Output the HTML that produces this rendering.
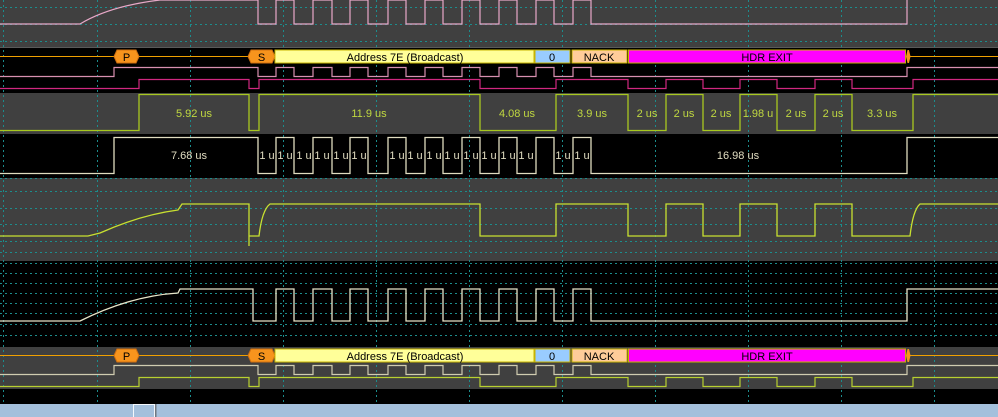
<!DOCTYPE html>
<html><head><meta charset="utf-8"><style>
html,body{margin:0;padding:0;background:#000;width:998px;height:417px;overflow:hidden}
svg{display:block}
text{font-family:"Liberation Sans",sans-serif;font-size:11px}
</style></head><body>
<svg width="998" height="417" viewBox="0 0 998 417" xmlns="http://www.w3.org/2000/svg">
<!-- bands -->
<rect x="0" y="0" width="998" height="47" fill="#404040"/>
<rect x="0" y="47" width="998" height="1" fill="#5a5a5a"/>
<rect x="0" y="93" width="998" height="41" fill="#404040"/>
<rect x="0" y="178" width="998" height="83" fill="#404040"/>
<rect x="0" y="347" width="998" height="42" fill="#404040"/>
<rect x="0" y="404" width="998" height="13" fill="#a4c0dc"/>
<rect x="133.5" y="404.5" width="21" height="13" fill="#a4c0dc" stroke="#f4f8fc"/>
<rect x="155" y="404" width="1.5" height="13" fill="#707880"/>
<!-- grid -->
<g stroke="#1c8c8c" stroke-width="1" stroke-dasharray="2,3" fill="none">
<path d="M3.5 0V403M97.5 0V403M190.5 0V403M283.5 0V403M376.5 0V403M469.5 0V403M562.5 0V403M655.5 0V403M748.5 0V403M841.5 0V403M934.5 0V403"/>
<path d="M0 7.5H998M0 24.5H998M0 41.5H998M0 191.5H998M0 208.5H998M0 224.5H998M0 241.5H998M0 252.5H998M0 263.5H998M0 273.5H998M0 283.5H998M0 293.5H998M0 303.5H998M0 313.5H998M0 324.5H998M0 335.5H998M0 178.5H998"/>
</g>
<!-- top pink analog -->
<path d="M0 24H80Q110 6 160 0L258 0V24H276V0H294V24H313V0H332V24H350V0H368V24H388V0H406V24H425V0H443V24H462V0H480V24H499V0H517V24H536V0H554V24H573V0H591V24H907V-2" fill="none" stroke="#e8a8c8" stroke-width="1.2"/>
<!-- decode bar top -->
<g>
<path d="M0 56.5H114M138 56.5H249M910 56.5H998" stroke="#f0a000" stroke-width="1"/>
<polygon points="114,56.5 117,50 136,50 139,56.5 136,63 117,63" fill="#f7941d" stroke="#d07010"/>
<text x="126.5" y="61" text-anchor="middle" fill="#000">P</text>
<polygon points="248,56.5 251,50 272,50 275,56.5 272,63 251,63" fill="#f7941d" stroke="#d07010"/>
<text x="261.5" y="61" text-anchor="middle" fill="#000">S</text>
<rect x="275" y="50" width="259" height="13" fill="#ffff99" stroke="#c8b400"/>
<text x="405" y="61" text-anchor="middle" fill="#000">Address 7E (Broadcast)</text>
<rect x="535" y="50" width="35" height="13" fill="#99ccff" stroke="#c8b400"/>
<text x="552" y="61" text-anchor="middle" fill="#000">0</text>
<rect x="572" y="50" width="55" height="13" fill="#ffcc99" stroke="#c8b400"/>
<text x="599" y="61" text-anchor="middle" fill="#000">NACK</text>
<rect x="628.5" y="50" width="277" height="13" fill="#ff00ff" stroke="#c8b400"/>
<text x="767" y="61" text-anchor="middle" fill="#000">HDR EXIT</text>
<polygon points="906,56.5 907.5,50 909,50 910.5,56.5 909,63 907.5,63" fill="#f7941d"/>
</g>
<path d="M0 76.5H114V67.5H258V76.5H276V67.5H294V76.5H313V67.5H332V76.5H350V67.5H368V76.5H388V67.5H406V76.5H425V67.5H443V76.5H462V67.5H480V76.5H499V67.5H517V76.5H536V67.5H554V76.5H573V67.5H591V76.5H907V67.5H998" fill="none" stroke="#d890b0" stroke-width="1.2"/>
<path d="M0 88.5H139V79.5H249V88.5H259V79.5H480V88.5H556V79.5H628V88.5H666V79.5H703V88.5H740V79.5H777V88.5H815V79.5H852V88.5H913V79.5H998" fill="none" stroke="#d02880" stroke-width="1.2"/>
<!-- yellow-green row -->
<path d="M0 130.5H139V94.5H249V130.5H259V94.5H480V130.5H556V94.5H628V130.5H666V94.5H703V130.5H740V94.5H777V130.5H815V94.5H852V130.5H913V94.5H998" fill="none" stroke="#a8c820" stroke-width="1.3"/>
<g fill="#c0d840" text-anchor="middle">
<text x="194" y="117">5.92 us</text><text x="369" y="117">11.9 us</text><text x="517" y="117">4.08 us</text><text x="592" y="117">3.9 us</text>
<text x="647" y="117">2 us</text><text x="684" y="117">2 us</text><text x="721" y="117">2 us</text><text x="758" y="117">1.98 u</text>
<text x="796" y="117">2 us</text><text x="833" y="117">2 us</text><text x="882" y="117">3.3 us</text>
</g>
<!-- cream row -->
<path d="M0 173.5H114V137.5H258V173.5H276V137.5H294V173.5H313V137.5H332V173.5H350V137.5H368V173.5H388V137.5H406V173.5H425V137.5H443V173.5H462V137.5H480V173.5H499V137.5H517V173.5H536V137.5H554V173.5H573V137.5H591V173.5H907V137.5H998" fill="none" stroke="#e0dcc0" stroke-width="1.3"/>
<g fill="#e0dcc0" text-anchor="middle">
<text x="189" y="159">7.68 us</text><text x="738" y="159">16.98 us</text>
<text x="267" y="159">1 u</text><text x="285" y="159">1 u</text><text x="304" y="159">1 u</text><text x="322" y="159">1 u</text><text x="341" y="159">1 u</text><text x="359" y="159">1 u</text>
<text x="397" y="159">1 u</text><text x="415" y="159">1 u</text><text x="434" y="159">1 u</text><text x="452" y="159">1 u</text><text x="471" y="159">1 u</text><text x="489" y="159">1 u</text><text x="508" y="159">1 u</text><text x="526" y="159">1 u</text>
<text x="563" y="159">1 u</text><text x="582" y="159">1 u</text>
</g>
<!-- yellow analog -->
<path d="M0 236H88L100 233Q140 215 178 210L182 204H249V246V236H259Q262 210 270 204H480V236H556V204H628V236H666V204H703V236H740V204H777V236H815V204H852V236H910Q913 210 920 204H998" fill="none" stroke="#c8e030" stroke-width="1.3"/>
<!-- cream analog -->
<path d="M0 321H80Q130 296 178 293L180 289H253V321H276V289H294V321H313V289H332V321H350V289H368V321H388V289H406V321H425V289H443V321H462V289H480V321H499V289H517V321H536V289H554V321H573V289H591V321H907V289H998" fill="none" stroke="#e8e4c8" stroke-width="1.3"/>
<!-- decode bar bottom -->
<g>
<path d="M0 355.5H114M138 355.5H249M910 355.5H998" stroke="#f0a000" stroke-width="1"/>
<polygon points="114,355.5 117,349 136,349 139,355.5 136,362 117,362" fill="#f7941d" stroke="#d07010"/>
<text x="126.5" y="360" text-anchor="middle" fill="#000">P</text>
<polygon points="248,355.5 251,349 272,349 275,355.5 272,362 251,362" fill="#f7941d" stroke="#d07010"/>
<text x="261.5" y="360" text-anchor="middle" fill="#000">S</text>
<rect x="275" y="349" width="259" height="13" fill="#ffff99" stroke="#c8b400"/>
<text x="405" y="360" text-anchor="middle" fill="#000">Address 7E (Broadcast)</text>
<rect x="535" y="349" width="35" height="13" fill="#99ccff" stroke="#c8b400"/>
<text x="552" y="360" text-anchor="middle" fill="#000">0</text>
<rect x="572" y="349" width="55" height="13" fill="#ffcc99" stroke="#c8b400"/>
<text x="599" y="360" text-anchor="middle" fill="#000">NACK</text>
<rect x="628.5" y="349" width="277" height="13" fill="#ff00ff" stroke="#c8b400"/>
<text x="767" y="360" text-anchor="middle" fill="#000">HDR EXIT</text>
<polygon points="906,355.5 907.5,349 909,349 910.5,355.5 909,362 907.5,362" fill="#f7941d"/>
</g>
<path d="M0 374.5H114V365.5H258V374.5H276V365.5H294V374.5H313V365.5H332V374.5H350V365.5H368V374.5H388V365.5H406V374.5H425V365.5H443V374.5H462V365.5H480V374.5H499V365.5H517V374.5H536V365.5H554V374.5H573V365.5H591V374.5H907V365.5H998" fill="none" stroke="#d0ccb0" stroke-width="1.2"/>
<path d="M0 386.5H139V377.5H249V386.5H259V377.5H480V386.5H556V377.5H628V386.5H666V377.5H703V386.5H740V377.5H777V386.5H815V377.5H852V386.5H913V377.5H998" fill="none" stroke="#b8d030" stroke-width="1.2"/>
</svg>
</body></html>
